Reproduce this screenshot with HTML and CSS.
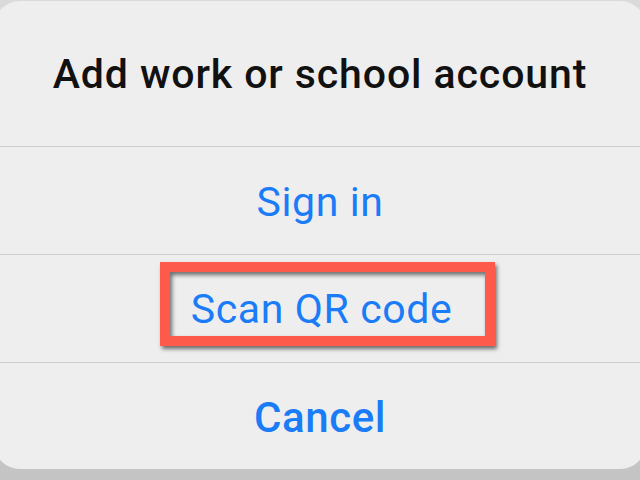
FILE: index.html
```html
<!DOCTYPE html>
<html lang="en">
<head>
    <meta charset="UTF-8">
    <meta name="viewport" content="width=device-width, initial-scale=1.0">
    <title>Add work or school account</title>
    <link rel="stylesheet" href="styles.css">
</head>
<body>
    <div class="sheet">
        <div class="sheet-title">Add work or school account</div>
        <button class="sheet-action">Sign in</button>
        <button class="sheet-action">
            <span class="highlight">Scan QR code</span>
        </button>
        <button class="sheet-action cancel">Cancel</button>
    </div>
</body>
</html>
```

FILE: styles.css
```css
html, body {
    margin: 0;
    height: 100%;
}
body {
    font-family: Roboto, "Liberation Sans", sans-serif;
    background: linear-gradient(to bottom, #dadada, #c4c4c4);
    overflow: hidden;
}
.sheet {
    margin: 1px -6px 0;
    height: 468px;
    background: #eeeeee;
    border-radius: 26px;
    display: flex;
    flex-direction: column;
    overflow: hidden;
}
.sheet-title {
    height: 145px;
    display: flex;
    align-items: center;
    justify-content: center;
    font-size: 41px;
    font-weight: 500;
    letter-spacing: 0.9px;
    color: #111;
    padding-top: 1px;
    box-sizing: border-box;
}
.sheet-action {
    height: 108px;
    border: 0;
    border-top: 1px solid #cdcdcd;
    background: transparent;
    font-family: inherit;
    font-size: 41px;
    line-height: 48px;
    letter-spacing: 0.6px;
    color: #1a7cf6;
    display: flex;
    align-items: center;
    justify-content: center;
    padding: 3px 0 0;
}
.sheet-action.cancel {
    flex: 1;
    font-size: 42px;
    font-weight: 500;
    padding-top: 3px;
}
/* annotation frame */
.highlight {
    display: inline-block;
    border: 10px solid #fe5a4c;
    padding: 13px 33px 3px 21px;
    margin: 0 0 12px 15px;
    box-shadow: 2px 3px 4px rgba(0, 0, 0, 0.55), inset 2px 3px 4px rgba(0, 0, 0, 0.55);
}
```
